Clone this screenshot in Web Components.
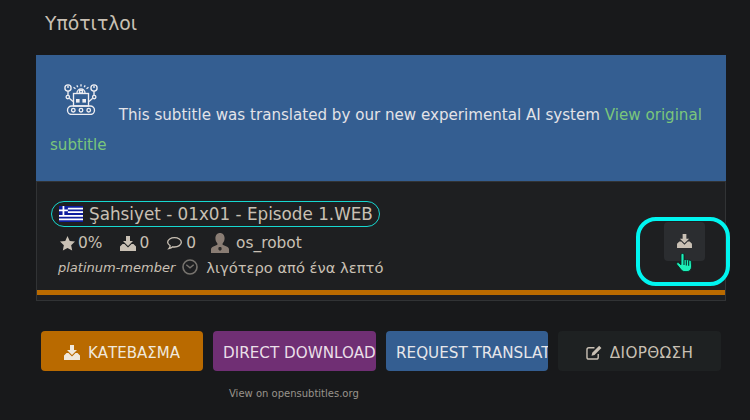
<!DOCTYPE html>
<html>
<head>
<meta charset="utf-8">
<title>Υπότιτλοι</title>
<style>
  html, body { margin: 0; height: 100%; background: #18191b; overflow: hidden; }
  body { font-family: "DejaVu Sans", sans-serif; color: #c9c0b4; }
</style>
</head>
<body>
<subtitle-page>
  <subtitle-notice slot="card">
    This subtitle was translated by our new experimental AI system <a>View original</a> <a>subtitle</a>
  </subtitle-notice>
  <subtitle-entry slot="card"></subtitle-entry>
  <action-bar></action-bar>
</subtitle-page>

<script>
const ICONS = {
  download: '<svg viewBox="0 0 16 15"><path fill="currentColor" d="M6 0h4v5h3L8 10 3 5h3z"/><path fill="currentColor" d="M0 10.500 2.500 8H4.500L8 11.500 11.500 8h2L16 10.500V15H0z"/></svg>',
  star: '<svg viewBox="0 0 16 16"><path fill="currentColor" d="M8 0l2.400 5.200 5.600.7-4.100 3.900 1.100 5.700L8 12.700l-5 2.800 1.100-5.700L0 5.900l5.600-.7z"/></svg>',
  comment: '<svg viewBox="0 0 16 16"><path fill="none" stroke="currentColor" stroke-width="1.400" d="M8 1.700c4 0 7.300 2.200 7.300 5s-3.300 5-7.300 5c-.7 0-1.300-.1-1.900-.2-1 1-2.600 1.700-4.100 1.900.8-.9 1.300-1.900 1.400-3C1.900 9.500.7 8.200.7 6.700c0-2.800 3.300-5 7.300-5z"/></svg>',
  user: '<svg class="user" viewBox="0 0 18 20"><path fill="#8a7d74" d="M9 0c2.800 0 4.600 2.200 4.600 5.300 0 2-.8 4-2 5.100v1.300l4 1.700c1.500.7 2.400 1.500 2.400 3V20H0v-3.600c0-1.500.9-2.300 2.400-3l4-1.700v-1.300c-1.200-1.100-2-3.100-2-5.100C4.400 2.200 6.200 0 9 0z"/><path fill="#2c2a29" d="M7.800 14h2.400l.6 2.200L9 18l-1.800-1.800z"/></svg>',
  clock: '<svg viewBox="0 0 16 16"><circle cx="8" cy="8" r="7" fill="none" stroke="#77736e" stroke-width="1.600"/><path fill="none" stroke="#77736e" stroke-width="1.400" d="M4.300 5.700 8 8.800l3.700-3.100"/></svg>',
  edit: '<svg viewBox="0 0 17 16"><path fill="none" stroke="currentColor" stroke-width="1.500" d="M13 9.500V13a2 2 0 0 1-2 2H3a2 2 0 0 1-2-2V5a2 2 0 0 1 2-2h6"/><path fill="currentColor" d="M14 .8l2.400 2.400L9 10.600 5.800 11.400 6.600 8.200z"/></svg>',
  flag: '<svg viewBox="0 0 27 18" preserveAspectRatio="none"><rect width="27" height="18" fill="#0d1c9e"/><path fill="#fff" d="M10 2h17v2H10zM10 6h17v2H10zM0 10h27v2H0zM0 14h27v2H0z"/><path fill="#fff" d="M4 0h2v10H4zM0 4h10v2H0z"/></svg>',
  robot: '<svg viewBox="0 0 34 31" fill="none" stroke="#eeeef2" stroke-width="1.350"><circle cx="4" cy="4" r="3.100"/><circle cx="30" cy="4" r="3.100"/><path d="M4 1.500v2.500M30 1.500v2.500M4 7v4.300M30 7v4.300"/><circle cx="3.800" cy="13" r="1.700"/><circle cx="30.200" cy="13" r="1.700"/><path d="M5.300 14.300l3.700 3.200M28.700 14.300l-3.700 3.200"/><path d="M13 9a4 4 0 0 1 8 0"/><rect x="15.500" y="6.500" width="3" height="2.500"/><path d="M9.500 3.200l2 1.500M12.800 1.300l1 1.800M17 .3v2.200M21.200 1.300l-1 1.800M24.500 3.200l-2 1.500"/><rect x="9.500" y="9.500" width="15" height="12.500"/><rect x="12" y="15" width="3.600" height="3.600" fill="#eeeef2" stroke="none"/><rect x="18.400" y="15" width="3.600" height="3.600" fill="#eeeef2" stroke="none"/><rect x="3.500" y="22" width="27" height="8.500" rx="4.200"/><circle cx="9.300" cy="26.200" r="1.800"/><circle cx="17" cy="26.200" r="1.800"/><circle cx="24.700" cy="26.200" r="1.800"/></svg>'
};

class SubtitlePage extends HTMLElement {
  constructor() {
    super();
    const shadowRoot = this.attachShadow({ mode: 'open' });
    shadowRoot.innerHTML = `
      <style>
        :host { display: block; padding: 12px 24px 0 36px; }
        h1 { margin: 0 0 19px 9px; font: 400 18.800px/24px "DejaVu Sans", sans-serif; color: #c9c0b4; }
        .card { border: 1px solid #313335; border-top: 0; }
      </style>
      <h1>Υπότιτλοι</h1>
      <div class="card"><slot name="card"></slot></div>
      <slot></slot>
    `;
  }
}

class SubtitleNotice extends HTMLElement {
  constructor() {
    super();
    const shadowRoot = this.attachShadow({ mode: 'open' });
    shadowRoot.innerHTML = `
      <style>
        :host { display: block; box-sizing: border-box; height: 126px; margin: 0 -1px; padding: 29px 14px 0; background: #345e91; color: #e3e3e8; font-size: 15.100px; line-height: 30px; }
        .robot { display: inline-block; width: 34px; height: 31px; margin: 0 16px 0 14px; vertical-align: 5px; }
        .robot svg { display: block; }
        ::slotted(a) { color: #7bc67b; }
      </style>
      <span class="robot">${ICONS.robot}</span><slot></slot>
    `;
  }
}

class SubtitleEntry extends HTMLElement {
  constructor() {
    super();
    const shadowRoot = this.attachShadow({ mode: 'open' });
    shadowRoot.innerHTML = `
      <style>
        :host { display: block; position: relative; height: 119px; box-sizing: border-box; padding: 19px 14px 0; border-top: 1px solid #313335; background: #1e1f21; font-size: 15.400px; color: #c9c0b4; }
        .title { display: inline-flex; align-items: center; gap: 6px; height: 26px; box-sizing: border-box; padding: 0 6px 0 7px; border: 1px solid #17d8d0; border-radius: 13px; font-size: 16.800px; white-space: nowrap; }
        .flag { width: 24px; height: 16px; display: block; }
        .flag svg { display: block; width: 24px; height: 16px; }
        .stats { display: flex; align-items: center; height: 28px; padding-left: 9px; margin-top: 2px; }
        .stat { display: flex; align-items: center; gap: 4px; }
        .stat svg { display: block; width: 15px; height: 15px; }
        .stat.wide svg { width: 16px; }
        .stat .user { width: 18px; height: 20px; }
        .meta { display: flex; align-items: center; height: 20px; padding-left: 7px; font-size: 14.700px; }
        .meta i { font-size: 13px; }
        .meta svg { display: block; width: 16px; height: 16px; margin: 0 8px 0 7px; }
        .bar { position: absolute; left: 0; right: 0; bottom: 5px; height: 5px; background: #b96a00; }
        .dl { position: absolute; left: 627px; top: 40px; width: 41px; height: 39px; display: flex; align-items: center; justify-content: center; background: #2b2d30; border-radius: 4px; color: #c9c0b4; }
        .dl svg { width: 15px; height: 14px; display: block; margin-top: -2px; }
        .ring { position: absolute; left: 599px; top: 35px; width: 94px; height: 69px; box-sizing: border-box; border: 4px solid #00f5f0; border-radius: 20px; pointer-events: none; }
        .hand { position: absolute; left: 639px; top: 71px; width: 18px; height: 19px; }
      </style>
      <div class="title"><span class="flag">${ICONS.flag}</span><span>Şahsiyet - 01x01 - Episode 1.WEB</span></div>
      <div class="stats">
        <span class="stat" style="gap:3px;margin-right:18px">${ICONS.star}<span>0%</span></span>
        <span class="stat wide" style="gap:3px;margin-right:18px">${ICONS.download}<span>0</span></span>
        <span class="stat" style="margin-right:15px">${ICONS.comment}<span>0</span></span>
        <span class="stat" style="gap:7px">${ICONS.user}<span>os_robot</span></span>
      </div>
      <div class="meta"><i>platinum-member</i>${ICONS.clock}<span>λιγότερο από ένα λεπτό</span></div>
      <div class="bar"></div>
      <div class="dl">${ICONS.download}</div>
      <div class="ring"></div>
      <svg class="hand" viewBox="0 0 18 19"><path fill="#1cf0b8" stroke="#04201c" stroke-width=".8" d="M6.500.4c.9 0 1.500.6 1.500 1.500V7c.3-.8 2-.8 2.300.3.200-.8 2.100-.8 2.400.3.300-.7 2.300-.6 2.500.8l.4 4.600c0 3.200-1.700 5.600-4.600 5.600H9c-1.800 0-3-.8-4-2.100L.9 11.500c-.9-1.500.9-2.700 2.100-1.500l2 1.800V1.900C5 1 5.600.4 6.500.4z"/><path fill="none" stroke="#04201c" stroke-width="1" d="M8 7v5M10.300 7.500v5M12.700 7.800v5"/></svg>
    `;
  }
}

class ActionButton extends HTMLElement {
  constructor() {
    super();
    const shadowRoot = this.attachShadow({ mode: 'open' });
    shadowRoot.innerHTML = `
      <style>
        :host { display: flex; align-items: center; justify-content: var(--justify, center); gap: 8px; box-sizing: border-box; flex: 0 0 var(--w, 162px); min-width: 0; height: 40px; padding: 3px 10px 0; border-radius: 4px; background: var(--bg); color: var(--fg, #eee); font-size: 15.200px; white-space: nowrap; }
        .label { display: block; min-width: 0; margin-right: var(--bleed, 0); overflow: hidden; letter-spacing: var(--track, 0); }
      </style>
      <slot name="icon"></slot><span class="label"><slot></slot></span>
    `;
  }
}

class ActionBar extends HTMLElement {
  constructor() {
    super();
    const shadowRoot = this.attachShadow({ mode: 'open' });
    shadowRoot.innerHTML = `
      <style>
        :host { display: block; margin-top: 30px; padding: 0 5px; }
        .row { display: flex; gap: 10px; }
        .row svg { width: 16px; height: 15px; display: block; }
        .via { margin: 16px 0 0 188px; font-size: 10px; line-height: 14px; color: #98948c; }
      </style>
      <div class="row">
        <action-button style="--bg:#b96a00;--fg:#f0e8dc;font-size:15px"><span slot="icon">${ICONS.download}</span>ΚΑΤΕΒΑΣΜΑ</action-button>
        <action-button style="--bg:#702f74;--fg:#eadfe8;--w:163px;--justify:flex-start;--bleed:-10px">DIRECT DOWNLOAD</action-button>
        <action-button style="--bg:#345e91;--fg:#e6e6ea;--justify:flex-start;--bleed:-10px">REQUEST TRANSLATION</action-button>
        <action-button style="--bg:#1e2122;--fg:#c9c0b4;--w:163px;--track:.35px"><span slot="icon">${ICONS.edit}</span>ΔΙΟΡΘΩΣΗ</action-button>
      </div>
      <div class="via">View on opensubtitles.org</div>
    `;
  }
}

customElements.define('subtitle-page', SubtitlePage);
customElements.define('subtitle-notice', SubtitleNotice);
customElements.define('subtitle-entry', SubtitleEntry);
customElements.define('action-button', ActionButton);
customElements.define('action-bar', ActionBar);
</script>
</body>
</html>
